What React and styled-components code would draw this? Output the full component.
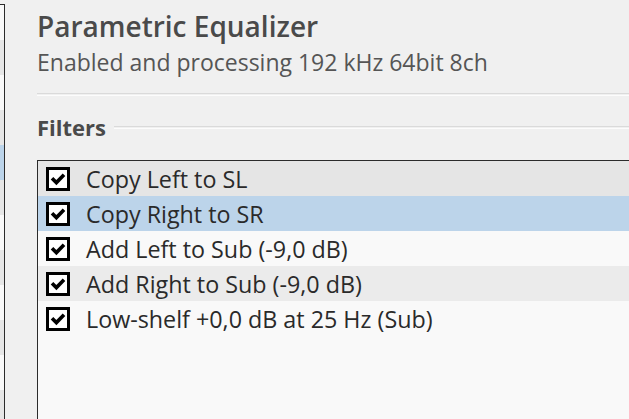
import React from "react";
import styled, { createGlobalStyle } from "styled-components";

const GlobalStyle = createGlobalStyle`
  html, body {
    margin: 0;
    padding: 0;
    background: #f0f0f0;
    overflow: hidden;
  }
  body {
    font-family: "Open Sans", "Noto Sans", sans-serif;
  }
`;

const Page = styled.div`
  display: flex;
  width: 629px;
  height: 419px;
  overflow: hidden;
`;

const SidePanel = styled.div`
  width: 4px;
  margin-top: 4px;
  border-top: 1px solid #2b2b2b;
  border-right: 1px solid #2b2b2b;
  display: flex;
  flex-direction: column;
  flex-shrink: 0;
`;

const SideRow = styled.div`
  height: 35px;
  flex-shrink: 0;
  background: ${(p) => (p.$selected ? "#bcd4ea" : p.$odd ? "#e6e6e6" : "#f9f9f9")};
`;

const Main = styled.div`
  flex: 1;
  min-width: 0;
  padding: 10px 0 0 32px;
  display: flex;
  flex-direction: column;
`;

const Title = styled.h1`
  margin: 0;
  font-size: 28px;
  font-weight: 600;
  line-height: 32px;
  color: #4a4a4a;
  white-space: nowrap;
`;

const Subtitle = styled.p`
  margin: 6px 0 0;
  font-size: 23px;
  line-height: 28px;
  color: #555;
  white-space: nowrap;
`;

const Divider = styled.div`
  margin-top: 17px;
  height: 1px;
  border-top: 1px solid #dadada;
  border-bottom: 1px solid #fcfcfc;
`;

const SectionHeader = styled.div`
  display: flex;
  align-items: center;
  gap: 8px;
  margin-top: 18px;
`;

const SectionTitle = styled.h2`
  margin: 0;
  font-size: 22px;
  font-weight: 700;
  line-height: 26px;
  color: #4a4a4a;
`;

const SectionLine = styled.div`
  flex: 1;
  height: 1px;
  border-top: 1px solid #dadada;
  border-bottom: 1px solid #fcfcfc;
`;

const ListBox = styled.div`
  margin-top: 20px;
  flex: 1;
  border: 1px solid #2b2b2b;
  border-right: none;
  border-bottom: none;
  background: #f9f9f9;
  display: flex;
  flex-direction: column;
`;

const rowColors = {
  hover: "#e5e5e5",
  selected: "#bcd4ea",
  alt: "#ebebeb",
  plain: "#f9f9f9",
};

const Row = styled.div`
  height: 35px;
  flex-shrink: 0;
  display: flex;
  align-items: center;
  gap: 16px;
  padding-left: 8px;
  background: ${(p) => rowColors[p.$state]};
`;

const Box = styled.div`
  width: 18px;
  height: 18px;
  border: 3px solid #000;
  background: #fff;
  display: flex;
  align-items: center;
  justify-content: center;
  flex-shrink: 0;
`;

const Label = styled.span`
  font-size: 23.3px;
  color: #2a2a2a;
  white-space: nowrap;
  line-height: 28px;
  padding-top: 1px;
`;

const Check = () => (
  <svg width="18" height="18" viewBox="0 0 18 18">
    <path d="M3 8.2 L7.4 12.6 L15 4.8" fill="none" stroke="#000" strokeWidth="3.6" />
  </svg>
);

const filters = [
  { name: "Copy Left to SL", state: "hover" },
  { name: "Copy Right to SR", state: "selected" },
  { name: "Add Left to Sub (-9,0 dB)", state: "plain" },
  { name: "Add Right to Sub (-9,0 dB)", state: "alt" },
  { name: "Low-shelf +0,0 dB at 25 Hz (Sub)", state: "plain" },
];

export default function App() {
  const sideRows = Array.from({ length: 12 });
  return (
    <>
      <GlobalStyle />
      <Page>
        <SidePanel>
          {sideRows.map((_, i) => (
            <SideRow key={i} $odd={i % 2 === 1} $selected={i === 4} />
          ))}
        </SidePanel>
        <Main>
          <Title>Parametric Equalizer</Title>
          <Subtitle>Enabled and processing 192 kHz 64bit 8ch</Subtitle>
          <Divider />
          <SectionHeader>
            <SectionTitle>Filters</SectionTitle>
            <SectionLine />
          </SectionHeader>
          <ListBox>
            {filters.map((f) => (
              <Row key={f.name} $state={f.state}>
                <Box>
                  <Check />
                </Box>
                <Label>{f.name}</Label>
              </Row>
            ))}
          </ListBox>
        </Main>
      </Page>
    </>
  );
}
